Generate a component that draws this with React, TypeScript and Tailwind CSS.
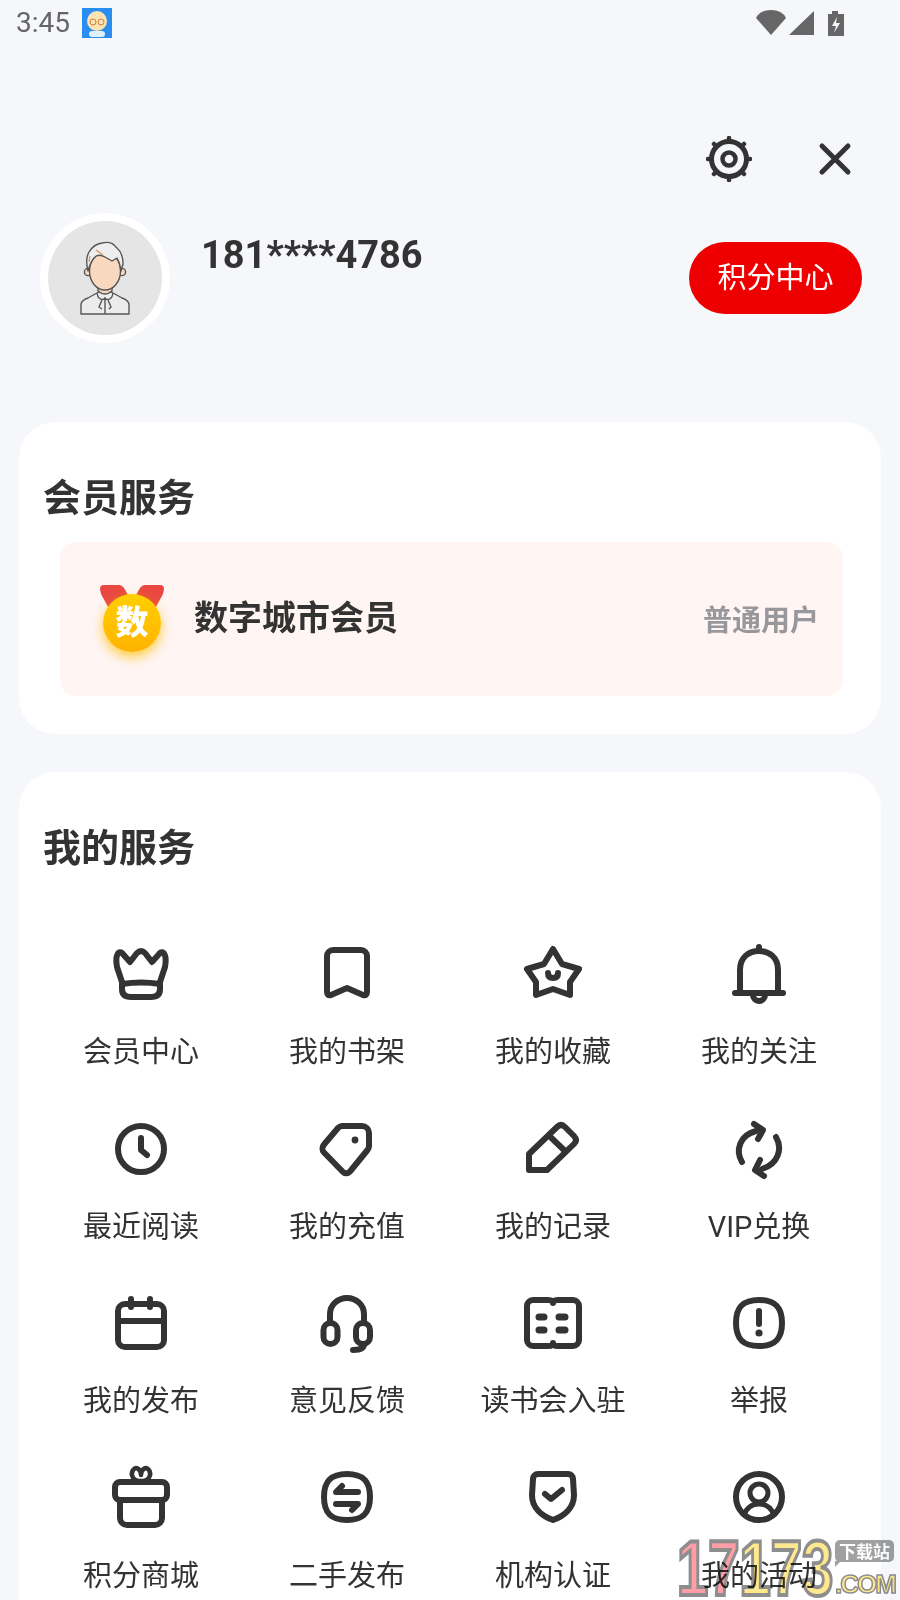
import type { ReactNode } from 'react'

const FONT = "font-['Roboto','Noto_Sans_CJK_SC',sans-serif]"

function Ico({ children }: { children: ReactNode }) {
  return (
    <svg
      width="64"
      height="64"
      viewBox="0 0 64 64"
      fill="none"
      stroke="#333333"
      strokeWidth="6"
      strokeLinecap="round"
      strokeLinejoin="round"
      className="overflow-visible"
    >
      {children}
    </svg>
  )
}

const services: { label: string; icon: ReactNode }[] = [
  {
    label: '会员中心',
    icon: (
      <>
        <path d="M13 39 L8 24 C6 13 9 7 13 10 L21 19 L28 10 Q32 6 36 10 L43 19 L51 10 C55 7 58 13 56 24 L51 39" />
        <path d="M13 41 Q32 38 51 41 L51 46 Q51 54 42 54 H22 Q13 54 13 46 Z" />
      </>
    ),
  },
  {
    label: '我的书架',
    icon: <path d="M12 13 a6 6 0 0 1 6-6 H46 a6 6 0 0 1 6 6 V49 Q52 53 48 52 L32 45 L16 52 Q12 53 12 49 Z" />,
  },
  {
    label: '我的收藏',
    icon: (
      <>
        <path d="M32 6 L41 21 L58 26 L49 39 L49 52 L32 46 L15 52 L15 39 L6 26 L23 21 Z" />
        <path d="M27 30 Q27 35 32 35 Q37 35 37 30" />
      </>
    ),
  },
  {
    label: '我的关注',
    icon: (
      <>
        <path d="M13 50 V27 C13 14 22 8 32 8 C42 8 51 14 51 27 V50" />
        <path d="M8 50 H56 M32 4 V8" />
        <path d="M26 52 a6 6 0 0 0 12 0" />
      </>
    ),
  },
  {
    label: '最近阅读',
    icon: (
      <>
        <circle cx="32" cy="31" r="23" />
        <path d="M32 20 V32 L38 37" />
      </>
    ),
  },
  {
    label: '我的充值',
    icon: (
      <>
        <path d="M27 8 H47 a7 7 0 0 1 7 7 V28 a6 6 0 0 1-1.5 4 L35 53.5 a5 5 0 0 1-7.5 0 L9 34.5 a6 6 0 0 1 0-8 L23 10 a6 6 0 0 1 4-2 Z" />
        <circle cx="40" cy="22" r="3.4" fill="#333333" stroke="none" />
      </>
    ),
  },
  {
    label: '我的记录',
    icon: (
      <>
        <path d="M8 36 L36 9 Q40 5 44 9 L53 18 Q57 22 53 26 L26 52 H8 Z" />
        <path d="M30.5 20 L44 33" />
      </>
    ),
  },
  {
    label: 'VIP兑换',
    icon: (
      <>
        <path d="M15 44 C8 32 13 17 29 13" />
        <path d="M27 6 L36 12 L31 21" />
        <path d="M49 19 C56 31 51 46 35 51" />
        <path d="M37 58 L28 52 L33 42" />
      </>
    ),
  },
  {
    label: '我的发布',
    icon: (
      <>
        <rect x="9" y="12" width="46" height="43" rx="7" />
        <path d="M9 29 H55 M22 7 V15 M41 7 V15" />
      </>
    ),
  },
  {
    label: '意见反馈',
    icon: (
      <>
        <path d="M15 29 V22 a17 16 0 0 1 34 0 V29" />
        <rect x="8.5" y="31" width="14" height="21" rx="7" />
        <rect x="41" y="31" width="14" height="21" rx="7" />
        <path d="M49 52 Q49 58 38 58" />
      </>
    ),
  },
  {
    label: '读书会入驻',
    icon: (
      <>
        <path d="M6 14 a6 6 0 0 1 6-6 H27 Q32 8 32 11 Q32 8 37 8 H52 a6 6 0 0 1 6 6 V48 a6 6 0 0 1-6 6 H37 Q32 54 32 51 Q32 54 27 54 H12 a6 6 0 0 1-6-6 Z" />
        <path d="M18 25 H23 M38 25 H44 M18 38 H23 M38 38 H44" strokeWidth="7" />
      </>
    ),
  },
  {
    label: '举报',
    icon: (
      <>
        <path d="M32 8 C48 8 55 15 55 31 C55 47 48 54 32 54 C16 54 9 47 9 31 C9 15 16 8 32 8 Z" />
        <path d="M32 19 V32" strokeWidth="6" />
        <circle cx="32" cy="41" r="3.6" fill="#333333" stroke="none" />
      </>
    ),
  },
  {
    label: '积分商城',
    icon: (
      <>
        <rect x="6" y="15" width="52" height="18" rx="5" />
        <path d="M11 33 V51 a7 7 0 0 0 7 7 H46 a7 7 0 0 0 7-7 V33" />
        <path d="M32 14 C24 14 21 8 24 3 C27 -1 32 2 32 8 C32 2 37 -1 40 3 C43 8 40 14 32 14 Z" strokeWidth="4.5" />
      </>
    ),
  },
  {
    label: '二手发布',
    icon: (
      <>
        <path d="M32 7 C48 7 55 14 55 30 C55 46 48 53 32 53 C16 53 9 46 9 30 C9 14 16 7 32 7 Z" />
        <path d="M43 25 H21 L27 19 M21 37 H43 L37 43" />
      </>
    ),
  },
  {
    label: '机构认证',
    icon: (
      <>
        <path d="M12 12 a5 5 0 0 1 5-5 H47 a5 5 0 0 1 5 5 L53 28 C53 41 43 49 32 53 C21 49 11 41 11 28 Z" />
        <path d="M24 27 L30 32 L41 23" />
      </>
    ),
  },
  {
    label: '我的活动',
    icon: (
      <>
        <circle cx="32" cy="30" r="23" />
        <circle cx="32" cy="26" r="9" strokeWidth="5" />
        <path d="M17 48 C20 40 26 37 32 37 C38 37 44 40 47 48" strokeWidth="5" />
      </>
    ),
  },
]

function StatusBar() {
  return (
    <div className="flex h-[46px] items-center pl-[16px]">
      <span className="text-[28px] leading-none text-[#666666]">3:45</span>
      <svg width="30" height="30" viewBox="0 0 30 30" className="ml-[12px]">
        <rect width="30" height="30" fill="#2a8df0" />
        <ellipse cx="15" cy="13" rx="10" ry="10" fill="#fbe3b4" />
        <circle cx="11" cy="14" r="3" fill="none" stroke="#c9813a" />
        <circle cx="19" cy="14" r="3" fill="none" stroke="#c9813a" />
        <rect x="7" y="23" width="16" height="6" rx="3" fill="#dff1fb" />
      </svg>
      <svg width="88" height="28" viewBox="0 0 88 28" className="mr-[56px] ml-auto">
        <path d="M0 9 Q4 1 15 1 Q26 1 30 9 L15 26 Z" fill="#666666" />
        <path d="M58 2 V26 H33 Z" fill="#666666" />
        <path d="M72 5 H76 V2 H82 V5 H88 V27 H72 Z" fill="#666666" />
        <path d="M81 8 L76 17 H80 L78 24 L84 14 H80 Z" fill="#f5f7fb" />
      </svg>
    </div>
  )
}

function Avatar() {
  return (
    <div className="flex h-[130px] w-[130px] shrink-0 items-center justify-center rounded-full bg-white">
      <div className="h-[114px] w-[114px] overflow-hidden rounded-full bg-[#e5e5e5]">
        <svg width="114" height="114" viewBox="0 0 114 114" fill="none" stroke="#555555" strokeWidth="1.4" strokeLinejoin="round">
          <path d="M33 93 V83 Q34 79 40 77 L49 72 Q57 66 65 72 L74 77 Q80 79 81 83 V93 Z" fill="#ececec" />
          <path d="M49 72 Q50 80 57 78 Q64 80 65 72" />
          <path d="M50 60 V70 Q57 76 64 70 V60 Z" fill="#f8d9c0" />
          <path d="M57 76 V93 M54 79 L51 86 L54 88 M60 79 L63 86 L61 88" />
          <circle cx="40" cy="51" r="3.6" fill="#f8d9c0" />
          <circle cx="74" cy="51" r="3.6" fill="#f8d9c0" />
          <ellipse cx="57" cy="50" rx="15.5" ry="19" fill="#f8d9c0" />
          <path d="M40 50 Q37 38 41 31 Q46 23 54 22 Q62 20 66 24 L69 27 Q75 32 75 43 L73 50 Q72 42 69 37 L64 40 L57 36 Q50 32 46 37 Q42 42 40 50 Z" fill="#eeeeee" />
          <path d="M48 29 L55 34 M42 35 L41 41" stroke="#d89a5c" />
        </svg>
      </div>
    </div>
  )
}

function Medal() {
  return (
    <div className="relative h-[70px] w-[64px] shrink-0">
      <svg width="64" height="34" viewBox="0 0 64 34" className="absolute top-0 left-0">
        <path d="M0 5 Q0 1 4 1 H19 Q22 1 24 4 L33 20 L13 32 L1 10 Z" fill="#e8483f" />
        <path d="M64 5 Q64 1 60 1 H45 Q42 1 40 4 L31 20 L51 32 L63 10 Z" fill="#e8483f" />
      </svg>
      <div className="absolute top-[10px] left-[3px] flex h-[58px] w-[58px] items-center justify-center rounded-full bg-gradient-to-b from-[#ffcf00] to-[#ffb300] text-[33px] font-black text-white shadow-[0_5px_12px_rgba(255,190,0,0.75)]">
        数
      </div>
    </div>
  )
}

function Watermark() {
  return (
    <div className="absolute right-0 bottom-0 flex h-[62px] w-[223px] items-start font-['Liberation_Sans',sans-serif] font-bold mix-blend-multiply">
      <div className="h-[60px] w-[158px] shrink-0">
        <div className="flex w-[220px] origin-left scale-x-[0.72] text-[78px] leading-[60px] [-webkit-text-stroke:4px_#8e8e8e]">
          <span className="text-[#ff9ea6]">1</span>
          <span className="text-[#ff9ea6]">7</span>
          <span className="text-[#ffe98e]">1</span>
          <span className="text-[#ffe98e]">7</span>
          <span className="text-[#ffe98e]">3</span>
        </div>
      </div>
      <div className="flex flex-1 flex-col items-start pt-[2px]">
        <span className="relative rounded-[5px] bg-[#a0a0a0] px-[4px] font-['Noto_Sans_CJK_SC',sans-serif] text-[17px] leading-[22px] text-white">
          下载站
          <span className="absolute -bottom-[5px] left-0 h-0 w-0 border-t-[6px] border-r-[6px] border-t-[#a0a0a0] border-r-transparent" />
        </span>
        <span className="mt-[10px] text-[26px] leading-[24px] tracking-[-2px] text-[#ffe98e] [-webkit-text-stroke:1.5px_#8e8e8e]">.COM</span>
      </div>
    </div>
  )
}

export default function App() {
  return (
    <div className={`${FONT} relative h-[1600px] w-[900px] overflow-hidden bg-[#f5f7fb]`}>
      <StatusBar />

      <div className="mt-[90px] flex h-[46px] items-center justify-end gap-[65px] pr-[47px]">
        <svg width="46" height="46" viewBox="0 0 46 46" fill="none" stroke="#333333">
          <circle cx="23" cy="23" r="17.5" strokeWidth="5" />
          <circle cx="23" cy="23" r="6.5" strokeWidth="4.5" />
          <path
            d="M23 2 V4 M23 42 V44 M2 23 H4 M42 23 H44 M8 8 L9.5 9.5 M36.5 36.5 L38 38 M38 8 L36.5 9.5 M9.5 36.5 L8 38"
            strokeWidth="4.5"
            strokeLinecap="round"
          />
        </svg>
        <svg width="36" height="36" viewBox="0 0 36 36" fill="none" stroke="#333333" strokeWidth="5" strokeLinecap="round">
          <path d="M5 5 L31 31 M31 5 L5 31" />
        </svg>
      </div>

      <div className="mt-[31px] ml-[40px] flex items-center pr-[38px]">
        <Avatar />
        <div className="mt-[-47px] ml-[31px] text-[38px] leading-[44px] font-bold text-[#333333]">181****4786</div>
        <div className="ml-auto flex h-[72px] w-[173px] items-center justify-center rounded-full bg-[#ee0000] pt-[2px] text-[29px] text-white">积分中心</div>
      </div>

      <section className="mx-[19px] mt-[79px] rounded-[36px] bg-white pt-[54px] pb-[38px]">
        <h2 className="ml-[24px] h-[44px] text-[38px] leading-[44px] font-bold text-[#333333]">会员服务</h2>
        <div className="mt-[22px] mr-[38px] ml-[41px] flex h-[154px] items-center rounded-[16px] bg-[#fff5f3] pr-[24px] pl-[40px]">
          <Medal />
          <div className="mt-[-2px] ml-[30px] text-[34px] leading-[44px] font-bold text-[#333333]">数字城市会员</div>
          <div className="mt-[3px] ml-auto text-[29px] leading-[40px] font-bold text-[#98989c]">普通用户</div>
        </div>
      </section>

      <section className="mx-[19px] mt-[38px] rounded-t-[36px] bg-white px-[19px] pt-[54px] pb-[40px]">
        <h2 className="ml-[5px] h-[44px] text-[38px] leading-[44px] font-bold text-[#333333]">我的服务</h2>
        <div className="mt-[73px] grid grid-cols-4 gap-y-[45.5px]">
          {services.map((s) => (
            <div key={s.label} className="flex flex-col items-center">
              <Ico>{s.icon}</Ico>
              <div className="mt-[25px] text-[29px] leading-[40px] text-[#333333]">{s.label}</div>
            </div>
          ))}
        </div>
      </section>

      <Watermark />
    </div>
  )
}
